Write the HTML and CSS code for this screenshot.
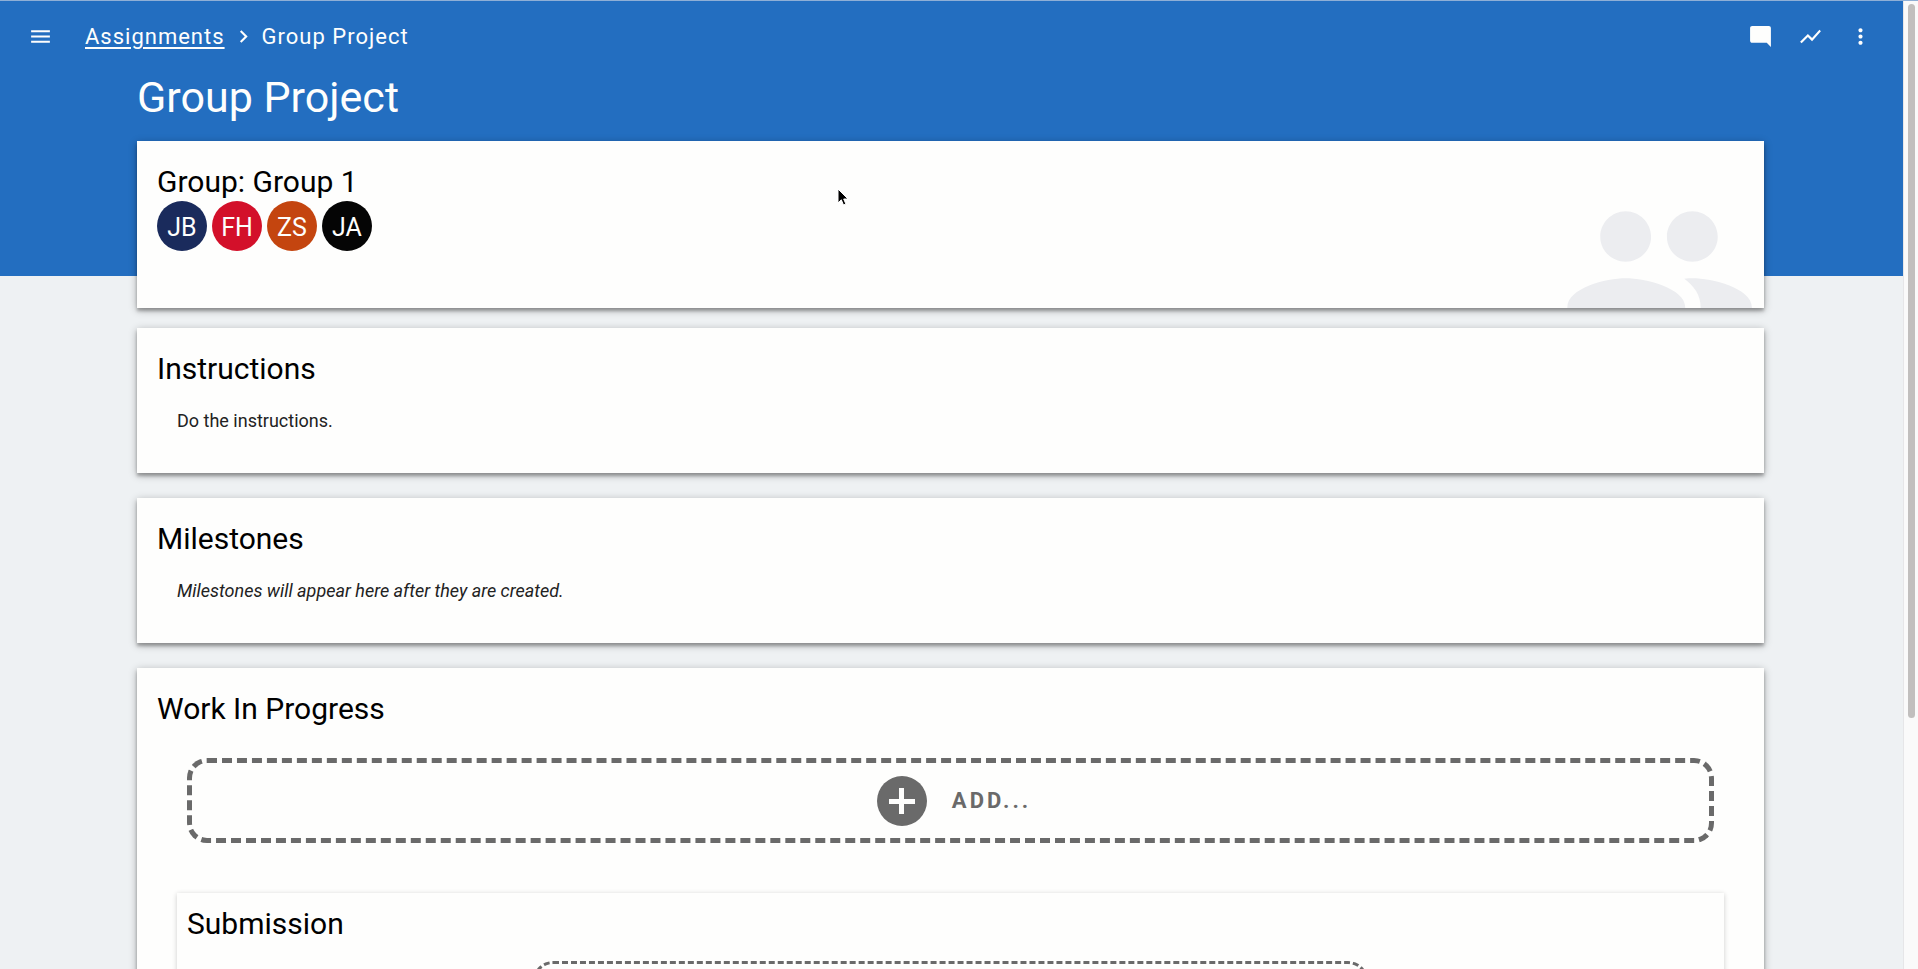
FILE: index.html
```html
<!DOCTYPE html>
<html lang="en">
<head>
    <meta charset="UTF-8">
    <meta name="viewport" content="width=device-width, initial-scale=1.0">
    <title>Group Project</title>
    <link rel="stylesheet" href="styles.css">
</head>
<body>
    <div class="page">
        <header class="top-bar">
            <button class="icon-button" type="button" aria-label="Menu">
                <svg viewBox="0 0 24 24"><path d="M3 18h18v-2H3v2zm0-5h18v-2H3v2zm0-7v2h18V6H3z"/></svg>
            </button>
            <nav class="breadcrumbs">
                <a href="#">Assignments</a>
                <svg viewBox="0 0 24 24"><path d="M10 6L8.590 7.410 13.170 12l-4.580 4.590L10 18l6-6z"/></svg>
                <span>Group Project</span>
            </nav>
            <div class="actions">
                <button class="icon-button" type="button" aria-label="Comments">
                    <svg viewBox="0 0 24 24"><path d="M21.990 4c0-1.100-.890-2-1.990-2H4c-1.100 0-2 .9-2 2v12c0 1.100.9 2 2 2h14l4 4-.010-18z"/></svg>
                </button>
                <button class="icon-button" type="button" aria-label="Activity">
                    <svg viewBox="0 0 24 24"><path d="M3.500 18.490l6-6.010 4 4L22 6.920l-1.410-1.410-7.090 7.970-4-4L2 16.990z"/></svg>
                </button>
                <button class="icon-button" type="button" aria-label="More">
                    <svg viewBox="0 0 24 24"><path d="M12 8c1.100 0 2-.9 2-2s-.9-2-2-2-2 .9-2 2 .9 2 2 2zm0 2c-1.100 0-2 .9-2 2s.9 2 2 2 2-.9 2-2-.9-2-2-2zm0 6c-1.100 0-2 .9-2 2s.9 2 2 2 2-.9 2-2-.9-2-2-2z"/></svg>
                </button>
            </div>
        </header>
        <main class="container">
            <h1>Group Project</h1>
            <section class="card group-card">
                <h2>Group: Group 1</h2>
                <div class="avatars">
                    <span class="avatar navy">JB</span>
                    <span class="avatar red">FH</span>
                    <span class="avatar orange">ZS</span>
                    <span class="avatar black">JA</span>
                </div>
                <svg class="group-icon" viewBox="0 0 24 24"><path d="M16 11c1.660 0 3.050-1.340 3.050-3S17.660 4.950 16 4.950s-3.050 1.390-3.050 3.050 1.390 3 3.050 3zm-8 0c1.660 0 3.050-1.340 3.050-3S9.660 4.950 8 4.950 4.950 6.340 4.950 8s1.390 3 3.050 3zm0 2c-2.330 0-7 1.170-7 3.500V19h14.150v-2.500c0-2.330-4.820-3.500-7.150-3.500zm8 0c-.290 0-.620.020-.970.050 1.160.840 1.970 1.970 1.970 3.450V19h6.150v-2.500c0-2.330-4.820-3.500-7.150-3.500z"/></svg>
            </section>
            <section class="card">
                <h2>Instructions</h2>
                <p>Do the instructions.</p>
            </section>
            <section class="card">
                <h2>Milestones</h2>
                <p><em>Milestones will appear here after they are created.</em></p>
            </section>
            <section class="card">
                <h2>Work In Progress</h2>
                <button class="add-button" type="button">
                    <span class="add-circle"><svg viewBox="0 0 50 50"><path d="M12 23h10V12h5v11h11v5H27v10h-5V28H12z"/></svg></span>
                    <span>ADD...</span>
                </button>
                <div class="submission">
                    <h2>Submission</h2>
                    <div class="drop-zone"></div>
                </div>
            </section>
        </main>
    </div>
    <div class="scrollbar"><div class="thumb"></div></div>
    <!-- mouse pointer -->
    <svg class="pointer" viewBox="0 0 12 19"><path d="M1 1v14l3.300-3.200 2.200 5.200 2.400-1-2.200-5H11z"/></svg>
</body>
</html>
```
FILE: styles.css
```css
* {
    box-sizing: border-box;
}
body {
    display: flex;
    height: 100vh;
    margin: 0;
    overflow: hidden;
    font-family: Roboto, sans-serif;
    background-color: #eef0f3;
    border-top: 1px solid #8fafd6;
}
h1, h2, p {
    margin: 0;
    font-weight: 400;
}
svg {
    display: block;
    fill: currentColor;
}
.page {
    flex: 1;
    overflow: hidden;
    background: linear-gradient(#236ec0 275px, #eef1f3 275px);
}
.top-bar {
    display: flex;
    align-items: center;
    height: 70px;
    padding: 0 18px 0 15px;
    color: #fefefd;
}
.icon-button {
    display: flex;
    align-items: center;
    justify-content: center;
    width: 50px;
    height: 50px;
    padding: 0;
    border: none;
    background: none;
    color: inherit;
    cursor: pointer;
}
.icon-button svg {
    width: 25px;
    height: 25px;
}
.breadcrumbs {
    display: flex;
    align-items: center;
    gap: 6px;
    margin-left: 20px;
    font-size: 22px;
    letter-spacing: 1px;
}
.breadcrumbs a {
    color: inherit;
    text-underline-offset: 3px;
    text-decoration-thickness: 2px;
}
.breadcrumbs svg {
    width: 25px;
    height: 25px;
}
.actions {
    display: flex;
    margin-left: auto;
}
.container {
    padding: 0 139px 0 137px;
}
h1 {
    height: 70px;
    font-size: 43px;
    line-height: 52px;
    color: #fefefd;
}
.card {
    min-height: 145px;
    margin-bottom: 25px;
    padding: 22px 20px 20px;
    background: #fefefd;
    box-shadow: 0 3px 3px rgba(0, 0, 0, 0.25), 0 2px 8px rgba(0, 0, 0, 0.3);
}
.card h2 {
    font-size: 30px;
    line-height: 38px;
    color: #000;
}
.card p {
    padding: 20px;
    font-size: 18px;
    line-height: 25px;
    color: #222;
}
.group-card {
    position: relative;
    height: 167px;
    margin-bottom: 20px;
    overflow: hidden;
}
.avatars {
    display: flex;
    gap: 5px;
}
.avatar {
    width: 50px;
    height: 50px;
    border-radius: 50%;
    font-size: 25px;
    line-height: 54px;
    text-align: center;
    color: #fefefd;
}
.navy { background: #1a2b5c; }
.red { background: #d3102a; }
.orange { background: #c4450f; }
.black { background: #050505; }
.group-icon {
    position: absolute;
    right: 5px;
    bottom: -62px;
    width: 200px;
    height: 200px;
    color: #ecedf0;
}
.add-button {
    display: flex;
    align-items: center;
    justify-content: center;
    gap: 25px;
    width: calc(100% - 60px);
    height: 85px;
    margin: 30px 30px 50px;
    padding: 0 0 0 7px;
    border: 5px dashed #6a6a6a;
    border-radius: 20px;
    background: none;
    font-family: inherit;
    font-size: 22px;
    font-weight: 700;
    letter-spacing: 3px;
    color: #6a6a6a;
    cursor: pointer;
}
.add-circle {
    width: 50px;
    height: 50px;
    border-radius: 50%;
    background: #6a6a6a;
    color: #fefefd;
}
.add-circle svg {
    width: 50px;
    height: 50px;
}
.submission {
    margin: 0 20px;
    padding: 12px 10px 10px;
    box-shadow: 0 1px 5px rgba(0, 0, 0, 0.2);
}
.drop-zone {
    width: 835px;
    max-width: 100%;
    height: 85px;
    margin: 18px auto;
    border: 3px dashed #6a6a6a;
    border-radius: 20px;
}
.scrollbar {
    width: 15px;
    padding: 3px 3px 0 4px;
    background: #fafafa;
    border-left: 1px solid #e6e6e8;
}
.thumb {
    height: 74%;
    border-radius: 4px;
    background: #c1bfbe;
}
.pointer {
    position: absolute;
    top: 188px;
    left: 837px;
    width: 12px;
    height: 19px;
    stroke: #fff;
    stroke-width: 1;
    fill: #000;
}
```
